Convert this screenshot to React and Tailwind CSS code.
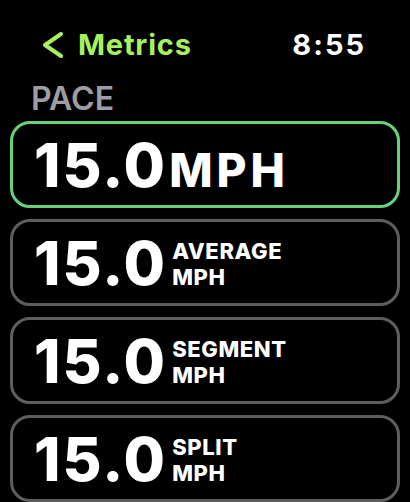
import React from 'react';

const rows = [
  { value: '15.0', label: 'AVERAGE' },
  { value: '15.0', label: 'SEGMENT' },
  { value: '15.0', label: 'SPLIT' },
];

function Chevron() {
  return (
    <svg width="22" height="26" viewBox="0 0 22 26" fill="none">
      <polyline
        points="19,2 3,13 19,24"
        stroke="#a6f15d"
        strokeWidth="4"
        strokeLinecap="round"
        strokeLinejoin="round"
      />
    </svg>
  );
}

export default function App() {
  return (
    <div className="w-[410px] h-[502px] bg-black overflow-hidden font-['Inter',sans-serif] text-white">
      {/* status / nav bar */}
      <div className="flex items-center justify-between pt-[31px] pl-[42px] pr-[44px]">
        <div className="flex items-center gap-[14px]">
          <Chevron />
          <span className="text-[29px] leading-[28px] font-bold tracking-[0.8px] text-[#a6f15d]">Metrics</span>
        </div>
        <span className="text-[29px] leading-[28px] font-bold tracking-[2px]">8:55</span>
      </div>

      <div className="mt-[24px] pl-[31px] text-[32px] leading-[32px] font-semibold text-[#9d9da3]">
        PACE
      </div>

      <div className="mt-[6px] px-[10px] flex flex-col gap-[11px]">
        <div className="h-[87px] shrink-0 rounded-[20px] border-[3px] border-[#68d17b] flex items-center pl-[21px]">
          <div className="flex items-baseline">
            <span className="text-[60px] leading-none font-extrabold tracking-[2px]">15.0</span>
            <span className="ml-[2px] text-[46px] leading-none font-extrabold tracking-[4px]">MPH</span>
          </div>
        </div>

        {rows.map((r) => (
          <div
            key={r.label}
            className="h-[87px] shrink-0 rounded-[20px] border-[3px] border-[#5e5e5e] flex items-center pl-[21px]"
          >
            <div className="flex items-end">
              <span className="text-[60px] leading-none font-extrabold tracking-[2px]">{r.value}</span>
              <div className="ml-[5px] mb-[3px] flex flex-col text-[22px] leading-[26px] font-extrabold tracking-[0.6px]">
                <span>{r.label}</span>
                <span>MPH</span>
              </div>
            </div>
          </div>
        ))}
      </div>
    </div>
  );
}
